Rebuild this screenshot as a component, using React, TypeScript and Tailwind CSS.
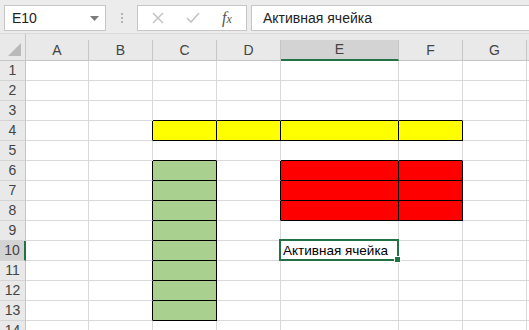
import React from "react";

const columns = [
  { label: "A", width: "w-[63px]" },
  { label: "B", width: "w-[64px]" },
  { label: "C", width: "w-[64px]" },
  { label: "D", width: "w-[64px]" },
  { label: "E", width: "w-[118px]" },
  { label: "F", width: "w-[64px]" },
  { label: "G", width: "w-[64px]" },
  { label: "", width: "w-[64px]" },
];

const rows = Array.from({ length: 14 }, (_, i) => i + 1);

// fills by "row:colIndex"
const fills: Record<string, string> = {};
[2, 3, 4, 5].forEach((c) => (fills[`4:${c}`] = "bg-[#ffff00]"));
[6, 7, 8, 9, 10, 11, 12, 13].forEach((r) => (fills[`${r}:2`] = "bg-[#a9d08e]"));
[6, 7, 8].forEach((r) => {
  fills[`${r}:4`] = "bg-[#ff0000]";
  fills[`${r}:5`] = "bg-[#ff0000]";
});

const ACTIVE_ROW = 10;
const ACTIVE_COL = 4;

function hasFill(r: number, c: number) {
  return Boolean(fills[`${r}:${c}`]);
}

function Cell({ row, col }: { row: number; col: number }) {
  const fill = fills[`${row}:${col}`] ?? "bg-white";
  const rightBlack = hasFill(row, col) || hasFill(row, col + 1);
  const bottomBlack = hasFill(row, col) || hasFill(row + 1, col);
  const isActive = row === ACTIVE_ROW && col === ACTIVE_COL;

  return (
    <div
      className={`relative h-[20px] shrink-0 border-r border-b ${columns[col].width} ${fill} ${
        rightBlack ? "border-r-black" : "border-r-[#d9d9d9]"
      } ${bottomBlack ? "border-b-black" : "border-b-[#d9d9d9]"}`}
    >
      {isActive ? (
        <>
          <div className="flex h-full items-end pl-[2px] pb-[1px] text-[13.5px] leading-[16px] text-black whitespace-nowrap">
            Активная ячейка
          </div>
          <div className="absolute -left-[2px] -top-[2px] -right-[1px] -bottom-[1px] z-10 border-2 border-[#217346]">
            <div className="absolute -right-[4px] -bottom-[4px] h-[7px] w-[7px] border border-white bg-[#217346]" />
          </div>
        </>
      ) : null}
    </div>
  );
}

function FxIcon() {
  return (
    <span className="font-['Liberation_Serif',serif] italic text-[#555] leading-none">
      <span className="text-[16px]">f</span>
      <span className="text-[12px]">x</span>
    </span>
  );
}

export default function App() {
  return (
    <div className="h-[330px] w-[529px] overflow-hidden bg-white font-['Liberation_Sans',Arial,sans-serif] text-[#222]">
      {/* formula bar */}
      <div className="flex h-[34px] items-start border-b border-[#dadada] bg-[#ececec] pt-[5px]">
        <div className="ml-[4px] flex h-[26px] w-[102px] items-center justify-between border border-[#c6c6c6] bg-white pl-[7px] pr-[6px] text-[14px]">
          <span>E10</span>
          <svg width="9" height="5" viewBox="0 0 9 5">
            <polygon points="0,0 9,0 4.5,5" fill="#7a7a7a" />
          </svg>
        </div>
        <div className="flex h-[26px] w-[31px] flex-col items-center justify-center gap-[2px]">
          <span className="h-[2px] w-[2px] bg-[#b5b5b5]" />
          <span className="h-[2px] w-[2px] bg-[#b5b5b5]" />
          <span className="h-[2px] w-[2px] bg-[#b5b5b5]" />
        </div>
        <div className="flex h-[26px] w-[110px] items-center border border-[#c6c6c6] bg-white">
          <svg className="ml-[14px]" width="12" height="12" viewBox="0 0 12 12">
            <path d="M1 1 L11 11 M11 1 L1 11" stroke="#c4c4c4" strokeWidth="1.5" />
          </svg>
          <svg className="ml-[22px]" width="14" height="12" viewBox="0 0 14 12">
            <path d="M1 6 L5 10 L13 1" stroke="#c4c4c4" strokeWidth="1.6" fill="none" />
          </svg>
          <span className="ml-[22px]">
            <FxIcon />
          </span>
        </div>
        <div className="ml-[4px] flex h-[26px] flex-1 items-center border border-r-0 border-[#c6c6c6] bg-white pl-[11px] text-[14px] whitespace-nowrap">
          Активная ячейка
        </div>
      </div>

      {/* column headers */}
      <div className="flex h-[27px] items-end bg-[#e9e9e9]">
        <div className="flex h-full w-[26px] shrink-0 items-end justify-end border-r border-b border-[#c6c6c6] pb-[4px] pr-[4px]">
          <svg width="13" height="13" viewBox="0 0 13 13">
            <polygon points="13,0 13,13 0,13" fill="#b9b9b9" />
          </svg>
        </div>
        {columns.map((col, i) => (
          <div
            key={i}
            className={`flex h-[21px] shrink-0 items-center justify-center border-r text-[14px] text-[#444] ${col.width} ${
              i === ACTIVE_COL
                ? "border-b-2 border-r-[#c6c6c6] border-b-[#217346] bg-[#d3d3d3]"
                : "border-b border-[#c6c6c6]"
            }`}
          >
            {col.label}
          </div>
        ))}
      </div>

      {/* rows */}
      {rows.map((r) => (
        <div key={r} className="flex">
          <div
            className={`flex h-[20px] w-[26px] shrink-0 items-center justify-center border-b border-b-[#d4d4d4] text-[14px] text-[#444] ${
              r === ACTIVE_ROW
                ? "border-r-2 border-r-[#217346] bg-[#d3d3d3]"
                : "border-r border-r-[#c6c6c6] bg-[#e9e9e9]"
            }`}
          >
            {r}
          </div>
          {columns.map((_, c) => (
            <Cell key={c} row={r} col={c} />
          ))}
        </div>
      ))}
    </div>
  );
}
